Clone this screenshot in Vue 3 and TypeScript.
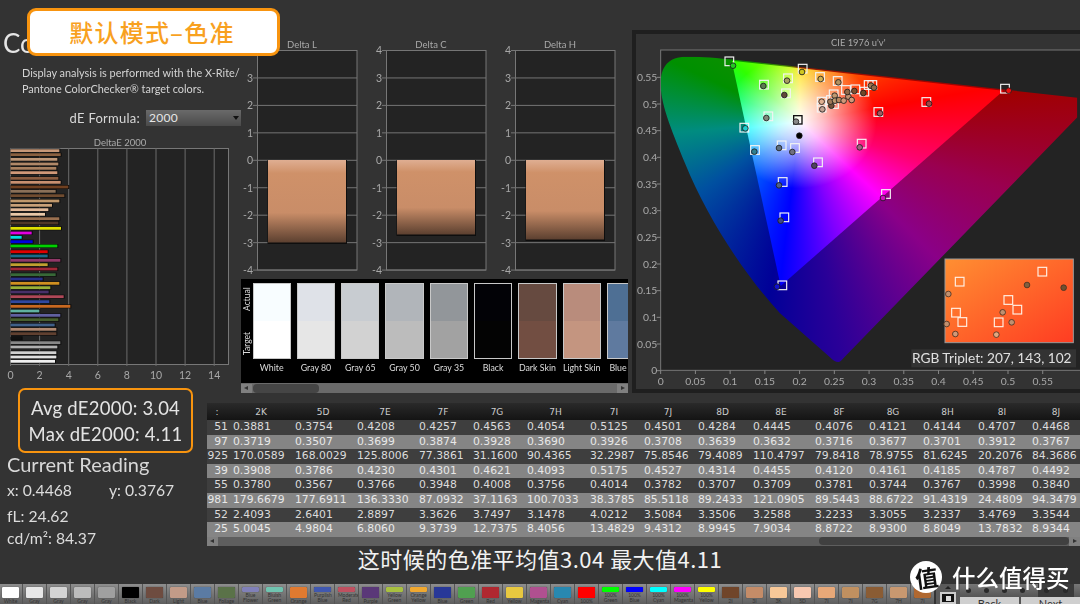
<script setup lang="ts">
const zy = [32,44,58,72,85,98,115,127,141,154,167,183,196,209,223,236,249,265,279,292,305,318,335,348,361,374,387,404,417,430,443,456,470,485,499,513,526,539,555,568,581,595,608,621,638,651,664]
const ze = [178,182,172,175,169,172,175,182,205,167,193,178,156,145,135,178,175,183,95,65,98,172,143,143,181,143,172,167,128,178,151,146,191,148,211,118,181,175,164,169,169,65,181,172,169,169,165]
const zc = ['#c89878','#8a6040','#c09878','#b08868','#a88060','#d09878','#8a5c40','#c89070','#704020','#8a7058','#704c30','#c0986c','#c8a078','#e0b898','#e8c8a8','#9a7050','#503828','#e0e000','#e000e0','#00e0e0','#0000e0','#00d000','#e00000','#1a6a88','#903868','#c0a030','#a02838','#386838','#283088','#d09020','#98b038','#483068','#b04858','#3048a0','#c86820','#60b0a0','#6060a0','#486030','#406088','#b08870','#604030','#101010','#888888','#b0b0b0','#d0d0d0','#e0e0e0','#f0f0f0']
const deBars = zy.map((y, i) => ({ y: 140 + y / 3 - 1.4, w: ze[i] / 3 - 10.5, c: zc[i] }))
const deTicks = [0, 2, 4, 6, 8, 10, 12, 14].map((v) => ({ v, x: 10.5 + v * 14.55 }))

const deltaCharts = [
  { title: 'Delta L', x: 18, w: 78, h: 82.5 },
  { title: 'Delta C', x: 19, w: 78, h: 74.5 },
  { title: 'Delta H', x: 19, w: 78, h: 79.5 },
]
const deltaTicks = [4, 3, 2, 1, 0, -1, -2, -3, -4]

const patches = [
  { n: 'White', a: '#f8fdff', t: '#ffffff' },
  { n: 'Gray 80', a: '#dfe2e8', t: '#e6e6e6' },
  { n: 'Gray 65', a: '#c8ccd1', t: '#d2d2d2' },
  { n: 'Gray 50', a: '#b1b5ba', t: '#bcbcbc' },
  { n: 'Gray 35', a: '#92969a', t: '#a2a2a2' },
  { n: 'Black', a: '#020206', t: '#030303' },
  { n: 'Dark Skin', a: '#664a40', t: '#724e42' },
  { n: 'Light Skin', a: '#b98c7c', t: '#c49580' },
  { n: 'Blue Sky', a: '#4e6f94', t: '#5f7a9f' },
]

const xTicks = ['0','0.05','0.1','0.15','0.2','0.25','0.3','0.35','0.4','0.45','0.5','0.55'].map((l, i) => ({ l, x: 92 + i * 104.2 }))
const yTicks = ['0','0.05','0.1','0.15','0.2','0.25','0.3','0.35','0.4','0.45','0.5','0.55'].map((l, i) => ({ l, y: 1022 - i * 80 }))

const squares = [[298,94],[402,164],[474,145],[518,116],[570,141],[623,153],[468,190],[415,259],[343,293],[375,360],[455,346],[495,354],[564,397],[695,341],[745,246],[889,216],[1125,176],[768,492],[458,456],[463,562],[457,766],[575,215],[575,233],[611,193],[612,222],[603,210],[648,180],[676,178],[703,185],[716,165],[727,165]]
const dots: [number, number, string][] = [[309,107,'#22c822'],[400,168,'#5a7a50'],[471,152,'#a8a060'],[516,126,'#d0c820'],[572,147,'#d0b050'],[625,157,'#b09060'],[463,195,'#604838'],[409,264,'#808878'],[346,295,'#20d0d0'],[498,275,'#888888'],[373,365,'#308090'],[447,354,'#607080'],[487,366,'#707080'],[553,407,'#504060'],[689,352,'#a06080'],[750,250,'#a05860'],[897,221,'#a04848'],[1136,182,'#f01010'],[759,504,'#d010c0'],[447,466,'#506088'],[452,572,'#404888'],[441,770,'#1010d0'],[508,317,'#000000'],[575,215,'#e0b090'],[577,238,'#c0a090'],[604,227,'#705038'],[601,215,'#a07858'],[614,197,'#c09870'],[615,212,'#c09870'],[627,210,'#b88860'],[641,212,'#d09878'],[655,200,'#c09070'],[665,210,'#d09878'],[652,186,'#906848'],[673,183,'#805030'],[700,189,'#704828'],[723,167,'#a07850'],[732,173,'#906848']]
const insetSquares = [[989,755],[1237,725],[1135,810],[1162,839],[978,848],[997,876],[1106,877]]
const insetDots: [number, number, string][] = [[955,792,'#c09070'],[1191,765,'#806040'],[1301,773,'#705030'],[1118,847,'#c09070'],[1145,877,'#c09070'],[950,882,'#c09070'],[976,912,'#d09878'],[1099,914,'#e0a880']]

const widths = [26,62,62,62,54,54,63,54,54,55,62,54,54,55,54,54]
const gridCols = widths.map((w) => w + 'px').join(' ')
const header = [':','2K','5D','7E','7F','7G','7H','7I','7J','8D','8E','8F','8G','8H','8I','8J']
const rows = [
  ['51','0.3881','0.3754','0.4208','0.4257','0.4563','0.4054','0.5125','0.4501','0.4284','0.4445','0.4076','0.4121','0.4144','0.4707','0.4468'],
  ['97','0.3719','0.3507','0.3699','0.3874','0.3928','0.3690','0.3926','0.3708','0.3639','0.3632','0.3716','0.3677','0.3701','0.3912','0.3767'],
  ['925','170.0589','168.0029','125.8006','77.3861','31.1600','90.4365','32.2987','75.8546','79.4089','110.4797','79.8418','78.9755','81.6245','20.2076','84.3686'],
  ['39','0.3908','0.3786','0.4230','0.4301','0.4621','0.4093','0.5175','0.4527','0.4314','0.4455','0.4120','0.4161','0.4185','0.4787','0.4492'],
  ['55','0.3780','0.3567','0.3766','0.3948','0.4008','0.3756','0.4014','0.3782','0.3707','0.3709','0.3781','0.3744','0.3767','0.3998','0.3840'],
  ['981','179.6679','177.6911','136.3330','87.0932','37.1163','100.7033','38.3785','85.5118','89.2433','121.0905','89.5443','88.6722','91.4319','24.4809','94.3479'],
  ['52','2.4093','2.6401','2.8897','3.3626','3.7497','3.1478','4.0212','3.5084','3.3506','3.2588','3.2233','3.3055','3.2337','3.4769','3.3544'],
  ['25','5.0045','4.9804','6.8060','9.3739','12.7375','8.4056','13.4829','9.4312','8.9945','7.9034','8.8722','8.9300','8.8049','13.7832','8.9344'],
]

const strip: { c: string; l: string; s?: boolean }[] = [
  { c: '#ffffff', l: 'White' }, { c: '#e8e8e8', l: 'Gray 80' }, { c: '#d4d4d4', l: 'Gray 65' }, { c: '#bcbcbc', l: 'Gray 50' }, { c: '#a0a0a0', l: 'Gray 35' },
  { c: '#000000', l: 'Black' }, { c: '#6e4c40', l: 'Dark Skin' }, { c: '#c29b88', l: 'Light Skin' }, { c: '#5b7ba3', l: 'Blue Sky' }, { c: '#5a7248', l: 'Foliage' },
  { c: '#8080b8', l: 'Blue Flower', s: true }, { c: '#70c4b0', l: 'Bluish Green', s: true }, { c: '#e07a30', l: 'Orange' }, { c: '#4058b0', l: 'Purplish Blue', s: true }, { c: '#c05060', l: 'Moderate Red', s: true },
  { c: '#5a3878', l: 'Purple' }, { c: '#a8c040', l: 'Yellow Green', s: true }, { c: '#f0a830', l: 'Orange Yellow', s: true }, { c: '#283898', l: 'Blue' }, { c: '#50a050', l: 'Green' },
  { c: '#b02830', l: 'Red' }, { c: '#e8c840', l: 'Yellow' }, { c: '#b05090', l: 'Magenta' }, { c: '#2888b0', l: 'Cyan' }, { c: '#ff0000', l: '100% Red' },
  { c: '#00ff00', l: '100% Green', s: true }, { c: '#0000ff', l: '100% Blue', s: true }, { c: '#00ffff', l: '100% Cyan', s: true }, { c: '#ff00ff', l: '100% Magenta', s: true }, { c: '#ffff00', l: '100% Yellow', s: true },
  { c: '#70452a', l: '2I' }, { c: '#c48c68', l: '3I' }, { c: '#f8c898', l: '3K' }, { c: '#f8c8b0', l: '5D' }, { c: '#e8a878', l: '7I' },
  { c: '#c09060', l: '7I' }, { c: '#8a5c34', l: '7G' }, { c: '#c89870', l: '7H' }, { c: '#b06830', l: '7I' },
]
</script>

<template>
  <div class="app">
    <div class="top">
      <section class="left">
        <h1 class="heading">Color</h1>
        <p class="intro">Display analysis is performed with the X-Rite/<br />Pantone ColorChecker® target colors.</p>
        <div class="formula">
          <span>dE Formula:</span>
          <div class="select">2000<i class="caret"></i></div>
        </div>
        <svg class="de-chart" width="240" height="250" viewBox="0 130 240 250">
          <text x="120" y="146" class="t-title" text-anchor="middle">DeltaE 2000</text>
          <rect x="10.5" y="148.5" width="218" height="216" fill="#232323" stroke="#777" />
          <line v-for="t in deTicks" :key="t.v" :x1="t.x" :x2="t.x" y1="148" y2="366" stroke="#6c6c6c" />
          <g v-for="(b, i) in deBars" :key="i">
            <rect x="10.5" :y="b.y - 0.6" :width="b.w + 1" height="4" fill="#0c0c0c" />
            <rect x="10.5" :y="b.y" :width="b.w" height="2.8" :fill="b.c" />
          </g>
          <text v-for="t in deTicks" :key="'l' + t.v" :x="t.x" y="379" class="t-axis" text-anchor="middle">{{ t.v }}</text>
        </svg>
      </section>

      <section class="middle">
        <div class="delta-row">
          <svg v-for="c in deltaCharts" :key="c.title" class="delta" width="128.3" height="240" viewBox="0 0 128.3 240">
            <text :x="c.x + 44" y="13" class="t-title" text-anchor="middle">{{ c.title }}</text>
            <rect :x="c.x - 0.5" y="15.5" width="99.5" height="219.5" fill="#232323" stroke="#777" />
            <g v-for="(t, i) in deltaTicks" :key="t">
              <line :x1="c.x - 5" :x2="c.x + 99" :y1="15.5 + i * 27.45" :y2="15.5 + i * 27.45" stroke="#757575" />
              <text :x="c.x - 5" :y="19.5 + i * 27.45" class="t-axis" text-anchor="end">{{ t }}</text>
            </g>
            <rect :x="c.x + 9.5" y="125" :width="c.w + 1.5" :height="c.h + 1.5" fill="#0e0e0e" />
            <rect :x="c.x + 10" y="125" :width="c.w" :height="c.h" :fill="'url(#' + c.title.replace(' ', '') + ')'" />
            <defs>
              <linearGradient :id="c.title.replace(' ', '')" x1="0" y1="0" x2="0" y2="1">
                <stop offset="0" stop-color="#dfae92" />
                <stop offset="0.16" stop-color="#cf9169" />
                <stop offset="0.64" stop-color="#c98d68" />
                <stop offset="1" stop-color="#5c4030" />
              </linearGradient>
            </defs>
          </svg>
        </div>
        <div class="patch-panel">
          <div class="patch-side"><span>Target</span><span>Actual</span></div>
          <div v-for="p in patches" :key="p.n" class="patch">
            <div class="patch-box">
              <div class="patch-half" :style="{ background: p.a }"></div>
              <div class="patch-half" :style="{ background: p.t }"></div>
            </div>
            <div class="patch-name">{{ p.n }}</div>
          </div>
        </div>
        <div class="hbar">
          <i class="arrow-l"></i>
          <i class="patch-thumb"></i>
          <i class="arrow-r"></i>
        </div>
      </section>

      <section class="cie">
        <svg class="cie-svg" width="444" height="355" viewBox="18 12 1332 1065">
          <defs>
            <clipPath id="shoe">
              <path d="M625 996 Q612 996 600 982 L450 850 C340 730 230 560 165 400 C120 290 92 220 92 160 C92 110 115 80 170 80 C200 80 240 81 300 88 L1342 203 L1342 262 L640 985 Q632 996 625 996 Z" />
            </clipPath>
            <clipPath id="tri">
              <path d="M305 92 L1120 182 L452 768 Z" />
            </clipPath>
            <linearGradient id="inset" x1="0" y1="0" x2="1" y2="1">
              <stop offset="0" stop-color="#ff8f32" />
              <stop offset="1" stop-color="#ff3c22" />
            </linearGradient>
          </defs>
          <text x="685" y="49" class="c-title" text-anchor="middle">CIE 1976 u'v'</text>
          <rect x="92" y="60" width="1270" height="961" fill="#232323" stroke="#777" stroke-width="3" />
          <foreignObject x="60" y="60" width="1290" height="960" clip-path="url(#shoe)">
            <div class="wash dark"></div>
          </foreignObject>
          <foreignObject x="60" y="60" width="1290" height="960" clip-path="url(#tri)">
            <div class="wash bright"><div class="wash white"></div></div>
          </foreignObject>

          <g v-for="t in xTicks" :key="t.l">
            <line :x1="t.x" :x2="t.x" y1="1021" y2="1032" stroke="#888" stroke-width="3" />
            <text :x="t.x" y="1064" class="c-axis" text-anchor="middle">{{ t.l }}</text>
          </g>
          <g v-for="t in yTicks" :key="'y' + t.l">
            <line x1="80" x2="92" :y1="t.y" :y2="t.y" stroke="#888" stroke-width="3" />
            <text x="82" :y="t.y + 11" class="c-axis" text-anchor="end">{{ t.l }}</text>
          </g>

          <rect v-for="(s, i) in squares" :key="'s' + i" :x="s[0] - 13" :y="s[1] - 13" width="26" height="26" fill="none" stroke="#f4f4f4" stroke-width="3.5" />
          <rect x="491" y="257" width="25" height="25" fill="none" stroke="#111" stroke-width="4" />
          <circle v-for="(d, i) in dots" :key="'d' + i" :cx="d[0]" :cy="d[1]" r="8.5" :fill="d[2]" stroke="#1c1c1c" stroke-width="2.5" />

          <rect x="945" y="687" width="385" height="251" fill="url(#inset)" stroke="#999" stroke-width="3" />
          <rect v-for="(s, i) in insetSquares" :key="'is' + i" :x="s[0] - 13" :y="s[1] - 13" width="26" height="26" fill="none" stroke="#fff0e4" stroke-width="3.5" />
          <circle v-for="(d, i) in insetDots" :key="'id' + i" :cx="d[0]" :cy="d[1]" r="8.5" :fill="d[2]" stroke="#4a3020" stroke-width="2.5" />

          <rect x="844" y="958" width="494" height="54" fill="#333" />
          <text x="846" y="999" class="c-rgb">RGB Triplet: 207, 143, 102</text>
        </svg>
      </section>
    </div>

    <div class="lower">
      <section class="reading">
        <div class="de-box">
          <div>Avg dE2000: 3.04</div>
          <div>Max dE2000: 4.11</div>
        </div>
        <div class="cur">Current Reading</div>
        <div class="xy"><span>x: 0.4468</span><span>y: 0.3767</span></div>
        <div class="lum">fL: 24.62</div>
        <div class="lum second">cd/m²: 84.37</div>
      </section>

      <section class="table">
        <div class="thead" :style="{ gridTemplateColumns: gridCols }">
          <div v-for="h in header" :key="h" class="th">{{ h }}</div>
        </div>
        <div v-for="(r, ri) in rows" :key="ri" class="tr" :class="{ alt: ri % 2 === 1 }" :style="{ gridTemplateColumns: gridCols }">
          <div v-for="(v, ci) in r" :key="ci" class="td" :class="{ cut: ci === 0 }">{{ v }}</div>
        </div>
        <div class="tscroll">
          <i class="arrow-l"></i>
          <i class="t-thumb"></i>
          <i class="arrow-r"></i>
        </div>
      </section>
    </div>

    <div class="subtitle">这时候的色准平均值3.04 最大值4.11</div>

    <div class="strip">
      <div v-for="(s, i) in strip" :key="i" class="cell">
        <div class="chip" :class="{ short: s.s }" :style="{ background: s.c }"></div>
        <div class="cell-l">{{ s.l }}</div>
      </div>
      <div class="ctrl-a">
        <i class="tri-up"></i>
        <div class="blackbox"><i></i></div>
      </div>
      <div class="ctrl-b">
        <div class="ctrl-icons">
          <i class="dot"></i><i class="dot"></i><i class="dot"></i><i class="dot"></i>
          <div class="ctrl-dark"><i class="dot"></i><i class="dot"></i></div>
        </div>
        <div class="ctrl-btns"><span>Back</span><span>Next</span></div>
      </div>
    </div>

    <div class="badge">默认模式–色准</div>

    <div class="brand">
      <div class="brand-mark"><span>值</span></div>
      <div class="brand-name">什么值得买</div>
    </div>
  </div>
</template>

<style>
html, body { margin: 0; background: #333; }
</style>

<style scoped>
.app {
  position: relative;
  width: 1080px;
  height: 604px;
  overflow: hidden;
  background: #333;
  color: #d8d8d8;
  font-family: Lato, "Noto Sans", sans-serif;
  display: flex;
  flex-direction: column;
}
.top { display: flex; height: 400px; flex: none; filter: blur(0.35px); }
.left { width: 240px; flex: none; }
.heading {
  margin: 27px 0 0 3px;
  font-size: 26px;
  line-height: 32px;
  font-weight: 400;
  color: #e6e6e6;
}
.intro {
  margin: 6px 0 0 22px;
  font-size: 10.9px;
  line-height: 16px;
  color: #d4d4d4;
  white-space: nowrap;
}
.formula {
  display: flex;
  align-items: center;
  justify-content: flex-end;
  gap: 6px;
  height: 16px;
  margin: 13px 0 0;
  width: 241px;
  font-size: 13px;
  line-height: 16px;
  letter-spacing: 0.25px;
  color: #d8d8d8;
}
.select {
  position: relative;
  width: 95px;
  height: 16px;
  padding-left: 3px;
  box-sizing: border-box;
  line-height: 16px;
  font-size: 12px;
  background: linear-gradient(#6a6a6a, #4a4a4a);
  color: #e6e6e6;
}
.caret {
  position: absolute;
  right: 2px;
  top: 6px;
  border: 3.5px solid transparent;
  border-top: 4px solid #111;
  border-bottom: 0;
}
.de-chart { display: block; margin-top: 4px; }
.t-title { font-size: 9.5px; fill: #aaa; font-family: Lato, sans-serif; }
.t-axis { font-size: 10.5px; fill: #a8a8a8; font-family: Lato, sans-serif; }

.middle { width: 392px; flex: none; }
.delta-row { display: flex; margin-top: 35px; height: 240px; }
.delta { display: block; flex: none; }
.patch-panel {
  display: flex;
  gap: 6px;
  width: 387px;
  height: 104px;
  margin: 4px 0 0 1px;
  padding-top: 4px;
  box-sizing: border-box;
  background: #000;
  overflow: hidden;
}
.patch-side {
  width: 10.5px;
  height: 76px;
  flex: none;
  display: flex;
  writing-mode: vertical-rl;
  transform: rotate(180deg);
  justify-content: space-between;
  align-items: center;
  font-size: 8.5px;
  color: #ddd;
  line-height: 10px;
  margin-left: 1px;
  margin-right: -6px;
  padding: 4px 0;
  box-sizing: border-box;
}
.patch { width: 38.3px; flex: none; }
.patch-box { height: 76px; border: 1px solid #c8c8c8; box-sizing: border-box; display: flex; flex-direction: column; }
.patch-box .patch-half { flex: 1; }
.patch-name { margin-top: 3px; text-align: center; font-size: 8.8px; color: #ddd; white-space: nowrap; }
.hbar {
  display: flex;
  align-items: center;
  width: 387px;
  height: 10px;
  margin-left: 1px;
  background: #6a6a6a;
}
.patch-thumb { width: 66px; height: 9px; margin-left: 1px; border-radius: 4px; background: #454545; }
.arrow-l, .arrow-r {
  flex: none;
  width: 11px;
  height: 9px;
  box-sizing: border-box;
  background: #808080;
  position: relative;
}
.arrow-l::after, .arrow-r::after {
  content: "";
  position: absolute;
  top: 2px;
  border: 2.5px solid transparent;
}
.arrow-l::after { left: 1px; border-right: 4px solid #333; }
.arrow-r::after { right: 1px; border-left: 4px solid #333; }
.arrow-r { margin-left: auto; }

.cie {
  width: 444px;
  height: 355px;
  margin: 30px 0 0 0;
  border: 4px solid #1f1f1f;
  border-right: 0;
  background: #333;
}
.cie-svg { display: block; }
.c-title { font-size: 28px; fill: #aaa; font-family: Lato, sans-serif; }
.c-axis { font-size: 31px; fill: #aaa; font-family: Lato, sans-serif; }
.c-rgb { font-size: 41px; fill: #e0e0e0; font-family: Lato, sans-serif; }
.wash { width: 1290px; height: 960px; }
.dark {
  background: conic-gradient(from 0deg at 450px 215px,
    #9a2000 0deg, #a00000 82deg, #9a0050 108deg, #8a0088 135deg, #2a0098 170deg, #000098 190deg, #0050a0 235deg, #008c80 265deg, #009000 295deg, #109000 320deg, #508000 350deg, #9a2000 360deg);
}
.bright {
  background: conic-gradient(from 0deg at 450px 215px,
    #ffe000 0deg, #ff8000 30deg, #ff0000 80deg, #ff0070 108deg, #ff00ff 133deg, #8000ff 162deg, #0000ff 187deg, #0070ff 228deg, #00ffff 263deg, #00ff60 290deg, #30ff00 312deg, #b0ff00 345deg, #ffe000 360deg);
}
.white {
  background: radial-gradient(ellipse 230px 200px at 450px 215px, #fff 0%, rgba(255,255,255,.75) 30%, rgba(255,255,255,0) 100%);
}

.lower { display: flex; height: 146px; flex: none; filter: blur(0.35px); }
.reading { width: 207px; flex: none; margin-top: -12px; }
.de-box {
  width: 175px;
  height: 65px;
  margin-left: 18px;
  box-sizing: border-box;
  border: 2.5px solid #f8940f;
  border-radius: 7px;
  display: flex;
  flex-direction: column;
  justify-content: center;
  align-items: center;
  font-size: 18.5px;
  line-height: 26px;
  color: #e4e4e4;
  letter-spacing: 0.25px;
}
.cur { margin: -1px 0 0 7px; font-size: 20px; line-height: 24px; color: #d8d8d8; }
.xy { display: flex; gap: 37px; margin: 2px 0 0 7px; font-size: 15.7px; line-height: 24px; color: #dcdcdc; }
.lum { margin: 2px 0 0 7px; font-size: 15.7px; line-height: 24px; color: #dcdcdc; }
.lum.second { margin-top: -2px; }

.table {
  width: 873px;
  height: 143px;
  margin-top: 3px;
  background: #2c2c2c;
  overflow: hidden;
  font-family: "DejaVu Sans", sans-serif;
  font-size: 10.8px;
}
.thead, .tr { display: grid; white-space: nowrap; }
.thead { height: 17px; background: linear-gradient(#2a2a2a, #141414); }
.th { text-align: center; padding-right: 6px; font-size: 9px; line-height: 18px; color: #ccc; }
.tr { height: 14.6px; line-height: 14.6px; background: #3e3e3e; color: #dcdcdc; }
.tr.alt { background: #858585; color: #e8e8e8; }
.td { overflow: visible; }
.td.cut { display: flex; justify-content: flex-end; padding-right: 5px; overflow: hidden; }
.tscroll { display: flex; align-items: center; height: 9px; background: #5e5e5e; }
.t-thumb { width: 250px; height: 8px; margin-left: auto; margin-right: 0; border-radius: 4px; background: #404040; }
.tscroll .arrow-r { margin-left: 0; }

.subtitle {
  height: 38px;
  flex: none;
  text-align: center;
  font-family: "Noto Sans CJK SC", sans-serif;
  font-size: 22px;
  letter-spacing: 0.48px;
  line-height: 25px;
  color: #f2f2f2;
  white-space: nowrap;
}
.strip { display: flex; height: 20px; flex: none; margin-left: -2px; overflow: hidden; filter: blur(0.35px); }
.cell {
  width: 24px;
  flex: none;
  box-sizing: border-box;
  padding: 3px 3px 0;
  background: linear-gradient(#8e8e8e, #5e5e5e);
  border-left: 1px solid #555;
  text-align: center;
  overflow: hidden;
}
.chip { height: 11px; border-radius: 1px; box-shadow: 0 0 1px #222; }
.chip.short { height: 5px; }
.cell-l { font-size: 5px; line-height: 5px; color: #333; margin-top: 1px; }
.ctrl-a {
  width: 24px;
  flex: none;
  margin-left: 2px;
  background: #5a5a5a;
  display: flex;
  flex-direction: column;
  align-items: center;
  gap: 3px;
  padding-top: 2px;
  box-sizing: border-box;
}
.tri-up { border: 3px solid transparent; border-bottom: 3px solid #222; border-top: 0; }
.blackbox { width: 12px; height: 12px; background: #111; border: 2px solid #ccc; display: flex; align-items: center; justify-content: center; }
.blackbox i { width: 5px; height: 5px; background: #ddd; }
.ctrl-b { flex: 1; display: flex; flex-direction: column; background: #555; }
.ctrl-icons { height: 13px; display: flex; align-items: center; justify-content: space-around; background: linear-gradient(#777, #555); }
.ctrl-dark { display: flex; gap: 14px; padding: 0 6px; height: 13px; align-items: center; background: #3a3a3a; }
.dot { width: 5px; height: 5px; border-radius: 50%; background: #2a2a2a; }
.ctrl-btns { display: flex; gap: 2px; flex: 1; }
.ctrl-btns span { flex: 1; background: #cfcfcf; color: #333; font-size: 11px; line-height: 13px; text-align: center; }

.badge {
  position: absolute;
  left: 27px;
  top: 8px;
  width: 253px;
  height: 48px;
  box-sizing: border-box;
  border: 3px solid #f8940f;
  border-radius: 9px;
  background: #fff;
  color: #f8a11f;
  font-family: "Noto Sans CJK SC", sans-serif;
  font-size: 24px;
  font-weight: 500;
  letter-spacing: 1.2px;
  line-height: 42px;
  text-align: center;
  padding-right: 3px;
}
.brand {
  position: absolute;
  left: 910px;
  top: 561px;
  display: flex;
  align-items: center;
  gap: 10px;
}
.brand-mark {
  width: 32px;
  height: 32px;
  border-radius: 50%;
  background: #fff;
  color: #111;
  display: flex;
  align-items: center;
  justify-content: center;
  font-family: "Noto Sans CJK SC", sans-serif;
  font-weight: 700;
  font-size: 23px;
}
.brand-mark span { display: block; transform: rotate(-8deg); line-height: 1; }
.brand-name {
  font-family: "Noto Sans CJK SC", sans-serif;
  font-size: 23.5px;
  font-weight: 500;
  color: #fff;
  line-height: 32px;
  white-space: nowrap;
}
</style>
